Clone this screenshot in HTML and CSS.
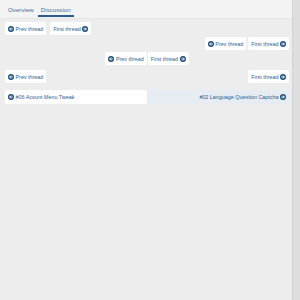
FILE: index.html
```html
<!DOCTYPE html>
<html>
<head>
<meta charset="utf-8">
<link rel="stylesheet" href="styles.css">
</head>
<body>
<svg width="0" height="0" class="defs">
  <symbol id="al" viewBox="0 0 12 12"><circle cx="6" cy="6" r="6" fill="#1f4b79"/><path d="M9 6H3.6M6 3.3L3.3 6L6 8.7" fill="none" stroke="#fff" stroke-width="1.8" stroke-linecap="round" stroke-linejoin="round"/></symbol>
  <symbol id="ar" viewBox="0 0 12 12"><circle cx="6" cy="6" r="6" fill="#1f4b79"/><path d="M3 6H8.4M6 3.3L8.7 6L6 8.7" fill="none" stroke="#fff" stroke-width="1.8" stroke-linecap="round" stroke-linejoin="round"/></symbol>
</svg>
<div class="page">
  <main class="main">
    <nav class="tabs">
      <span class="tab">Overview</span>
      <span class="tab active">Discussion</span>
    </nav>
    <div class="row left">
      <span class="btn"><svg class="ic"><use href="#al"/></svg>Prev thread</span>
      <span class="btn">First thread<svg class="ic"><use href="#ar"/></svg></span>
    </div>
    <div class="row right">
      <span class="btn"><svg class="ic"><use href="#al"/></svg>Prev thread</span>
      <span class="btn">First thread<svg class="ic"><use href="#ar"/></svg></span>
    </div>
    <div class="row center">
      <span class="btn"><svg class="ic"><use href="#al"/></svg>Prev thread</span>
      <span class="btn">First thread<svg class="ic"><use href="#ar"/></svg></span>
    </div>
    <div class="row split">
      <span class="btn"><svg class="ic"><use href="#al"/></svg>Prev thread</span>
      <span class="btn">First thread<svg class="ic"><use href="#ar"/></svg></span>
    </div>
    <div class="pager">
      <span class="pg prev"><svg class="ic"><use href="#al"/></svg>#06 Acount Menu Tweak</span>
      <span class="pg next">#02 Language Question Captcha<svg class="ic"><use href="#ar"/></svg></span>
    </div>
  </main>
  <div class="scroll"></div>
</div>
</body>
</html>
```
FILE: styles.css
```css
html, body { margin: 0; padding: 0; }
body {
  background: #ededed;
  font-family: "Liberation Sans", Arial, sans-serif;
  font-size: 5.4px;
  color: #2f5f8f;
}
.defs { position: absolute; }
.page { display: flex; height: 300px; }
.main { flex: 1; padding: 0 3px 0 5px; }
.scroll { width: 7px; background: #dedede; border-left: 1px solid #d2d2d2; }
.tabs {
  display: flex; gap: 7px;
  height: 13px; margin: 0 -3px 3px -5px; padding: 5px 0 0 8px;
  background: #f3f3f3;
  border-bottom: 1px solid #e6e6e6;
  color: #4a7199;
  font-size: 6.2px;
}
.tab { height: 11px; line-height: 9px; }
.tab.active { border-bottom: 2px solid #2b5b8c; padding: 0 3px; margin-left: -3px; height: 10px; }
.row { display: flex; gap: 2px; height: 13px; margin-bottom: 2px; }
.row.left { justify-content: flex-start; gap: 4px; }
.row.right { justify-content: flex-end; }
.row.center { justify-content: center; gap: 1px; }
.row.split { justify-content: space-between; margin-top: 5px; }
.btn {
  display: flex; align-items: center; gap: 1.5px;
  background: #fff; border-radius: 2px;
  padding: 0 3px; height: 13px;
}
.ic { width: 6px; height: 6px; flex: none; }
.pager { display: flex; margin-top: 7px; height: 14px; }
.pg { flex: 1; display: flex; align-items: center; gap: 1.5px; padding: 0 3px; border-radius: 2px; }
.pg.prev { background: #fff; }
.pg.next { background: #e6ecf2; justify-content: flex-end; }
```
